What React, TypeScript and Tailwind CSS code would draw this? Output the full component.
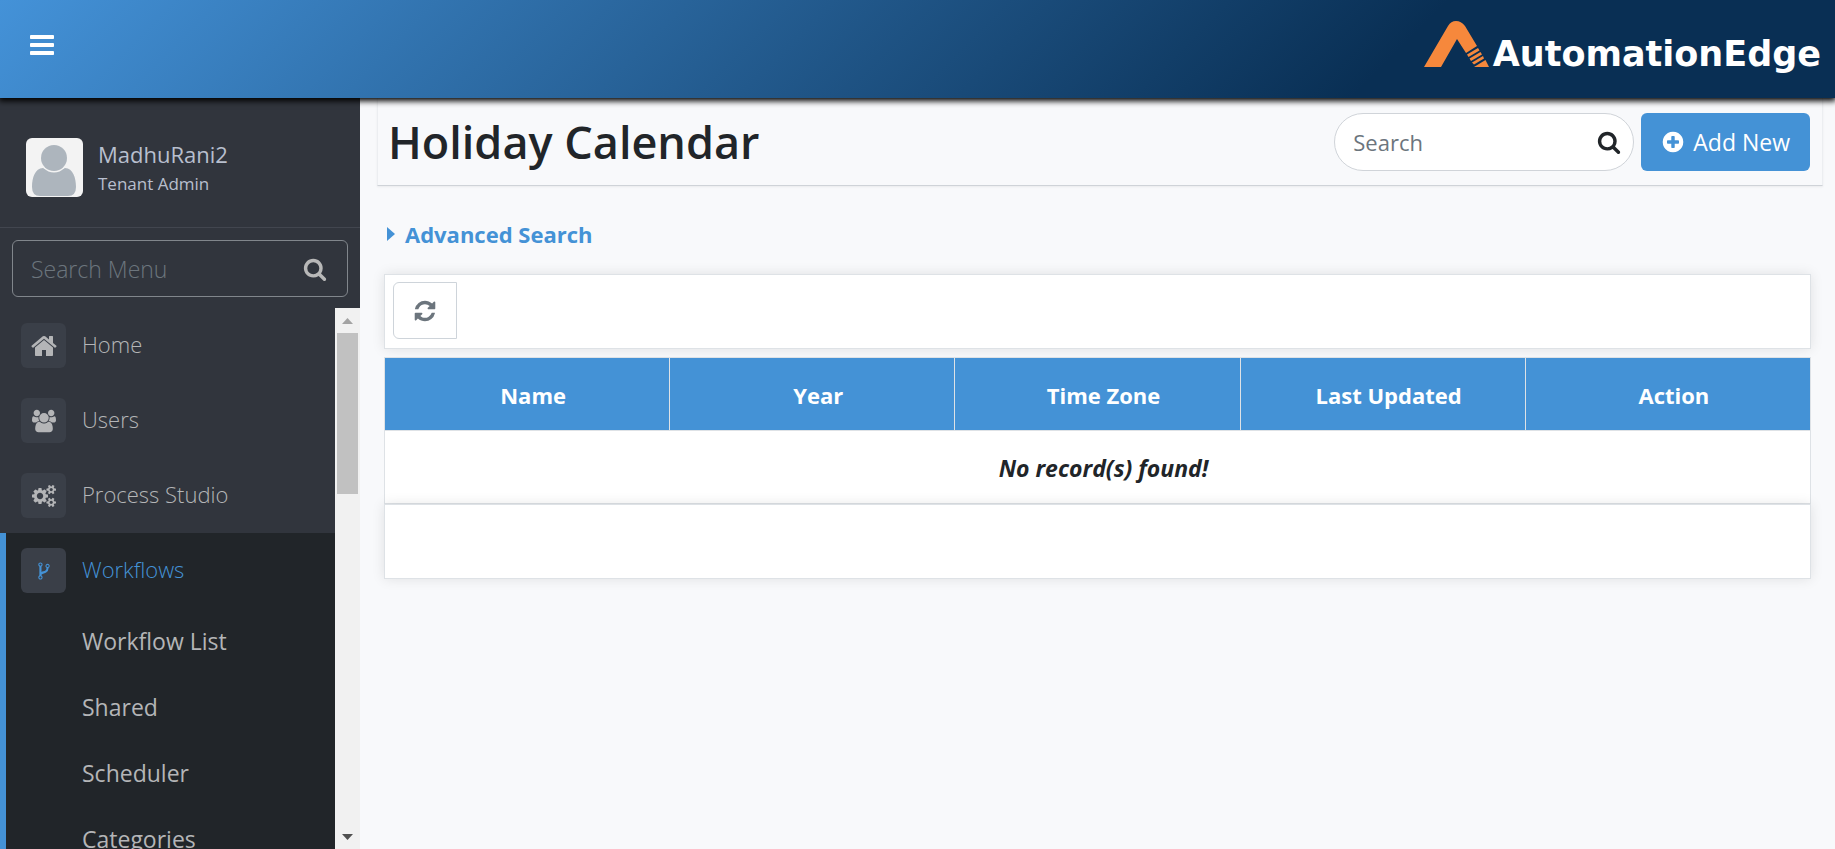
import type { ReactNode } from "react";

const paths = {
  bars: "M1664 1344v128q0 26-19 45t-45 19h-1408q-26 0-45-19t-19-45v-128q0-26 19-45t45-19h1408q26 0 45 19t19 45zm0-512v128q0 26-19 45t-45 19h-1408q-26 0-45-19t-19-45v-128q0-26 19-45t45-19h1408q26 0 45 19t19 45zm0-512v128q0 26-19 45t-45 19h-1408q-26 0-45-19t-19-45v-128q0-26 19-45t45-19h1408q26 0 45 19t19 45z",
  home: "M1472 992v480q0 26-19 45t-45 19h-384v-384h-256v384h-384q-26 0-45-19t-19-45v-480q0-1 .5-3t.5-3l575-474 575 474q1 2 1 6zm223-69l-62 74q-8 9-21 11h-3q-13 0-21-7l-692-577-692 577q-12 8-24 7-13-2-21-11l-62-74q-8-10-7-23.5t11-21.5l719-599q32-26 76-26t76 26l244 204v-195q0-14 9-23t23-9h192q14 0 23 9t9 23v408l219 182q10 8 11 21.5t-7 23.5z",
  search:
    "M1216 832q0-185-131.5-316.5t-316.5-131.5-316.5 131.5-131.5 316.5 131.5 316.5 316.5 131.5 316.5-131.5 131.5-316.5zm512 832q0 52-38 90t-90 38q-54 0-90-38l-343-342q-179 124-399 124-143 0-273.5-55.5t-225-150-150-225-55.5-273.5 55.5-273.5 150-225 225-150 273.5-55.5 273.5 55.5 225 150 150 225 55.5 273.5q0 220-124 399l343 343q37 37 37 90z",
  refresh:
    "M1639 1056q0 5-1 7-64 268-268 434.5t-478 166.5q-146 0-282.5-55t-243.5-157l-129 129q-19 19-45 19t-45-19-19-45v-448q0-26 19-45t45-19h448q26 0 45 19t19 45-19 45l-137 137q71 66 161 102t187 36q134 0 250-65t186-179q11-17 53-117 8-23 30-23h192q13 0 22.5 9.5t9.5 22.5zm25-800v448q0 26-19 45t-45 19h-448q-26 0-45-19t-19-45 19-45l138-138q-148-137-349-137-134 0-250 65t-186 179q-11 17-53 117-8 23-30 23h-199q-13 0-22.5-9.5t-9.5-22.5v-7q65-268 270-434.5t480-166.5q146 0 284 55.5t245 156.5l130-129q19-19 45-19t45 19 19 45z",
  plus: "M1344 960v-128q0-26-19-45t-45-19h-256v-256q0-26-19-45t-45-19h-128q-26 0-45 19t-19 45v256h-256q-26 0-45 19t-19 45v128q0 26 19 45t45 19h256v256q0 26 19 45t45 19h128q26 0 45-19t19-45v-256h256q26 0 45-19t19-45zm320-64q0 209-103 385.5t-279.5 279.5-385.5 103-385.5-103-279.5-279.5-103-385.5 103-385.5 279.5-279.5 385.5-103 385.5 103 279.5 279.5 103 385.5z",
  users:
    "M529 896q-162 5-265 128h-134q-82 0-138-40.5t-56-118.5q0-353 124-353 6 0 43.5 21t97.5 42.5 119 21.5q67 0 133-23-5 37-5 66 0 139 81 256zm1071 637q0 120-73 189.5t-194 69.5h-874q-121 0-194-69.5t-73-189.5q0-53 3.5-103.5t14-109 26.5-108.5 43-97.5 62-81 85.5-53.5 111.5-20q10 0 43 21.5t73 48 107 48 135 21.5 135-21.5 107-48 73-48 43-21.5q61 0 111.5 20t85.5 53.5 62 81 43 97.5 26.5 108.5 14 109 3.5 103.5zm-1024-1277q0 106-75 181t-181 75-181-75-75-181 75-181 181-75 181 75 75 181zm704 384q0 159-112.5 271.5t-271.5 112.5-271.5-112.5-112.5-271.5 112.5-271.5 271.5-112.5 271.5 112.5 112.5 271.5zm576 225q0 78-56 118.5t-138 40.5h-134q-103-123-265-128 81-117 81-256 0-29-5-66 66 23 133 23 59 0 119-21.5t97.5-42.5 43.5-21q124 0 124 353zm-128-609q0 106-75 181t-181 75-181-75-75-181 75-181 181-75 181 75 75 181z",
  cogs: "M832 896q0-106-75-181t-181-75-181 75-75 181 75 181 181 75 181-75 75-181zm768 512q0-52-38-90t-90-38-90 38-38 90q0 53 37.5 90.5t90.5 37.5 90.5-37.5 37.5-90.5zm0-1024q0-52-38-90t-90-38-90 38-38 90q0 53 37.5 90.5t90.5 37.5 90.5-37.5 37.5-90.5zm-384 421v185q0 10-7 19.5t-16 10.5l-155 24q-11 35-32 76 34 48 90 115 7 11 7 20 0 12-7 19-23 30-82.5 89.5t-78.5 59.5q-11 0-21-7l-115-90q-37 19-77 31-11 108-23 155-7 24-30 24h-186q-11 0-20-7.5t-10-17.5l-23-153q-34-10-75-31l-118 89q-7 7-20 7-11 0-21-8-144-133-144-160 0-9 7-19 10-14 41-53t47-61q-23-44-35-82l-152-24q-10-1-17-9.5t-7-19.5v-185q0-10 7-19.5t16-10.5l155-24q11-35 32-76-34-48-90-115-7-11-7-20 0-12 7-20 22-30 82-89t79-59q11 0 21 7l115 90q34-18 77-32 11-108 23-154 7-24 30-24h186q11 0 20 7.5t10 17.5l23 153q34 10 75 31l118-89q8-7 20-7 11 0 21 8 144 133 144 160 0 8-7 19-12 16-42 54t-45 60q23 48 34 82l152 23q10 2 17 10.5t7 19.5zm640 533v140q0 16-149 31-12 27-30 52 51 113 51 138 0 4-4 7-122 71-124 71-8 0-46-47t-52-68q-20 2-30 2t-30-2q-14 21-52 68t-46 47q-2 0-124-71-4-3-4-7 0-25 51-138-18-25-30-52-149-15-149-31v-140q0-16 149-31 13-29 30-52-51-113-51-138 0-4 4-7 4-2 35-20t59-34 30-16q8 0 46 46.5t52 67.5q20-2 30-2t30 2q51-71 92-112l6-2q4 0 124 70 4 3 4 7 0 25-51 138 17 23 30 52 149 15 149 31zm0-1024v140q0 16-149 31-12 27-30 52 51 113 51 138 0 4-4 7-122 71-124 71-8 0-46-47t-52-68q-20 2-30 2t-30-2q-14 21-52 68t-46 47q-2 0-124-71-4-3-4-7 0-25 51-138-18-25-30-52-149-15-149-31v-140q0-16 149-31 13-29 30-52-51-113-51-138 0-4 4-7 4-2 35-20t59-34 30-16q8 0 46 46.5t52 67.5q20-2 30-2t30 2q51-71 92-112l6-2q4 0 124 70 4 3 4 7 0 25-51 138 17 23 30 52 149 15 149 31z",
  fork: "M672 1472q0-40-28-68t-68-28-68 28-28 68 28 68 68 28 68-28 28-68zm0-1152q0-40-28-68t-68-28-68 28-28 68 28 68 68 28 68-28 28-68zm640 128q0-40-28-68t-68-28-68 28-28 68 28 68 68 28 68-28 28-68zm96 0q0 52-26 96.5t-70 69.5q-2 287-226 414-67 38-203 81-128 40-169.5 71t-41.5 100v26q44 25 70 69.5t26 96.5q0 80-56 136t-136 56-136-56-56-136q0-52 26-96.5t70-69.5v-820q-44-25-70-69.5t-26-96.5q0-80 56-136t136-56 136 56 56 136q0 52-26 96.5t-70 69.5v497q54-26 154-57 55-17 87.5-29.5t70.5-31 59-39.5 40.5-51 28-69.5 8.5-91.5q-44-25-70-69.5t-26-96.5q0-80 56-136t136-56 136 56 56 136z",
};

type IconName = keyof typeof paths;

function Icon({ name, className }: { name: IconName; className: string }) {
  const viewBox = name === "users" || name === "cogs" ? "-64 0 1920 1792" : "0 0 1792 1792";
  return (
    <svg viewBox={viewBox} className={`shrink-0 overflow-visible ${className}`} fill="currentColor" aria-hidden="true">
      <path d={paths[name]} />
    </svg>
  );
}

function Logo() {
  return (
    <a href="#" className="flex items-end gap-1 text-white">
      <svg viewBox="0 0 65 46" className="mb-2.5 h-[46px] w-[65px]" aria-hidden="true">
        <g fill="#f6883c">
          <path d="M0 46 24 5Q27 0 32 0Q37 0 41 5L53 25 42 32 33 18 17 46Z" />
          <path d="M43 33.500 54 27 55.500 29.500 44.500 36Z" />
          <path d="M45.500 37.500 56.500 31 58 33.500 47 40Z" />
          <path d="M48 41.500 59 35 60 37.500 50 43.500Z" />
          <path d="M50 46 61.500 39 65 46Z" />
        </g>
      </svg>
      <span className="font-['DejaVu_Sans',sans-serif] text-[35px] leading-[46px] font-bold">AutomationEdge</span>
    </a>
  );
}

function Header() {
  return (
    <header className="z-10 flex h-[98px] shrink-0 items-center justify-between bg-[linear-gradient(135deg,#4492d8_0%,#092f54_75%)] pr-3.5 pl-7 shadow-[0_2px_6px_1px_#000000]">
      <button type="button" aria-label="Toggle menu" className="mb-2 text-white">
        <Icon name="bars" className="size-7" />
      </button>
      <Logo />
    </header>
  );
}

function MenuItem({ icon, label, large, active }: { icon: IconName; label: string; large?: boolean; active?: boolean }) {
  return (
    <a
      href="#"
      className={`flex h-[75px] items-center gap-4 font-light ${active ? "pl-[15px] text-[#4492d6]" : "pl-[21px] text-[#b4b5b7]"}`}
    >
      <span className="flex size-[45px] items-center justify-center rounded-md bg-[#3a3f48]">
        <Icon name={icon} className={large ? "size-7" : active ? "size-5" : "size-6"} />
      </span>
      <span className="pb-1">{label}</span>
    </a>
  );
}

function ScrollBar() {
  return (
    <div className="flex w-[25px] shrink-0 flex-col items-center bg-[#f1f1f1]" aria-hidden="true">
      <div className="flex h-[25px] shrink-0 items-center">
        <svg viewBox="0 0 11 6" className="h-1.5 w-[11px]">
          <path d="M0 6 5.500 0 11 6Z" fill="#a3a3a3" />
        </svg>
      </div>
      <div className="h-[161px] w-[21px] bg-[#c1c1c1]" />
      <div className="mt-auto flex h-[25px] shrink-0 items-center">
        <svg viewBox="0 0 11 6" className="h-1.5 w-[11px]">
          <path d="M0 0 5.500 6 11 0Z" fill="#505050" />
        </svg>
      </div>
    </div>
  );
}

function Sidebar() {
  return (
    <aside className="flex w-[360px] shrink-0 flex-col bg-[#31353d]">
      <div className="flex h-[130px] shrink-0 items-center gap-[15px] border-b border-[#42464f] pt-2.5 pl-[26px]">
        <svg viewBox="0 0 57 59" className="h-[59px] w-[57px] rounded-md" role="img" aria-label="Avatar">
          <rect width="57" height="59" fill="#f3f3f3" />
          <path d="M6 49C6 40 9 30 17 30L20 31Q28 37 36 31L39 30C47 30 50 40 50 49Q50 58 42 58H14Q6 58 6 49Z" fill="#adb5bd" />
          <circle cx="28" cy="20" r="14.500" fill="#f3f3f3" />
          <circle cx="28" cy="20" r="13" fill="#adb5bd" />
        </svg>
        <div className="text-[#b8bfce]">
          <div className="leading-8">MadhuRani2</div>
          <div className="text-[17px] leading-7">Tenant Admin</div>
        </div>
      </div>
      <div className="mx-3 mt-3 mb-[11px] flex h-[57px] shrink-0 items-center rounded-md border border-[#81868c] pr-5 pl-[18px]">
        <input
          aria-label="Search Menu"
          placeholder="Search Menu"
          className="min-w-0 flex-1 bg-transparent text-[23px] font-light text-white outline-none placeholder:text-[#6c757d]"
        />
        <button type="button" aria-label="Search menu" className="text-[#b8b8b8]">
          <Icon name="search" className="size-6" />
        </button>
      </div>
      <div className="flex min-h-0 flex-1">
        <nav className="min-w-0 flex-1 overflow-hidden">
          <MenuItem icon="home" label="Home" large />
          <MenuItem icon="users" label="Users" />
          <MenuItem icon="cogs" label="Process Studio" />
          <div className="border-l-[6px] border-[#4492d6] bg-[#212529]">
            <MenuItem icon="fork" label="Workflows" active />
            <ul className="text-[23px] text-[#b4b5b7]">
              {["Workflow List", "Shared", "Scheduler", "Categories"].map((item) => (
                <li key={item}>
                  <a href="#" className="flex h-[66px] items-center pl-[76px]">
                    {item}
                  </a>
                </li>
              ))}
            </ul>
          </div>
        </nav>
        <ScrollBar />
      </div>
    </aside>
  );
}

function Panel({ children }: { children?: ReactNode }) {
  return <div className="h-[75px] border border-[#dee2e6] bg-white px-2 py-[7px] shadow-[0_0_12px_rgba(0,0,0,0.1)]">{children}</div>;
}

export default function App() {
  return (
    <div className="flex h-screen flex-col overflow-hidden bg-[#f8f9fb] font-['Open_Sans','Noto_Sans',sans-serif] text-[22px] leading-8 text-[#212529]">
      <Header />
      <div className="flex min-h-0 flex-1">
        <Sidebar />
        <main className="min-w-0 flex-1 pr-3 pl-[17px]">
          <div className="flex h-[88px] items-center justify-between border border-t-0 border-[#eceef1] border-b-[#cfd3d8] pr-3 pl-2.5 shadow-[0_1px_2px_rgba(0,0,0,0.06)]">
            <h1 className="text-[45px] leading-[58px] font-semibold">Holiday Calendar</h1>
            <div className="flex items-center gap-[7px]">
              <div className="flex h-[58px] w-[300px] items-center rounded-full border border-[#d0d4d9] bg-white pr-3 pl-[18px]">
                <input
                  aria-label="Search"
                  placeholder="Search"
                  className="min-w-0 flex-1 bg-transparent outline-none placeholder:text-[#6c757d]"
                />
                <button type="button" aria-label="Search">
                  <Icon name="search" className="size-6" />
                </button>
              </div>
              <button type="button" className="flex h-[58px] items-center gap-2 rounded-md bg-[#4492d6] px-5 text-[23px] text-white">
                <Icon name="plus" className="size-6" />
                Add New
              </button>
            </div>
          </div>
          <div className="pr-3 pl-[7px]">
            <button type="button" className="mt-8 mb-6 flex items-center gap-2.5 pl-[3px] font-bold text-[#4492d6]">
              <svg viewBox="0 0 8 14" className="h-3.5 w-2" aria-hidden="true">
                <path d="M0 0 8 7 0 14Z" fill="currentColor" />
              </svg>
              Advanced Search
            </button>
            <Panel>
              <button
                type="button"
                aria-label="Refresh"
                className="flex h-[57px] w-16 items-center justify-center rounded-l-md border border-[#ced4da] text-[#6c757d]"
              >
                <Icon name="refresh" className="size-6" />
              </button>
            </Panel>
            <table className="mt-2 w-full table-fixed border-collapse border border-[#dee2e6] bg-white">
              <thead>
                <tr className="h-[73px] bg-[#4492d6] text-white">
                  {["Name", "Year", "Time Zone", "Last Updated", "Action"].map((column) => (
                    <th key={column} className="border border-[#dee2e6] pt-0.5 pl-3 font-bold">
                      {column}
                    </th>
                  ))}
                </tr>
              </thead>
              <tbody>
                <tr className="h-[73px]">
                  <td colSpan={5} className="pt-0.5 pl-3 text-center text-[23px] font-bold italic">
                    No record(s) found!
                  </td>
                </tr>
              </tbody>
            </table>
            <Panel />
          </div>
        </main>
      </div>
    </div>
  );
}
